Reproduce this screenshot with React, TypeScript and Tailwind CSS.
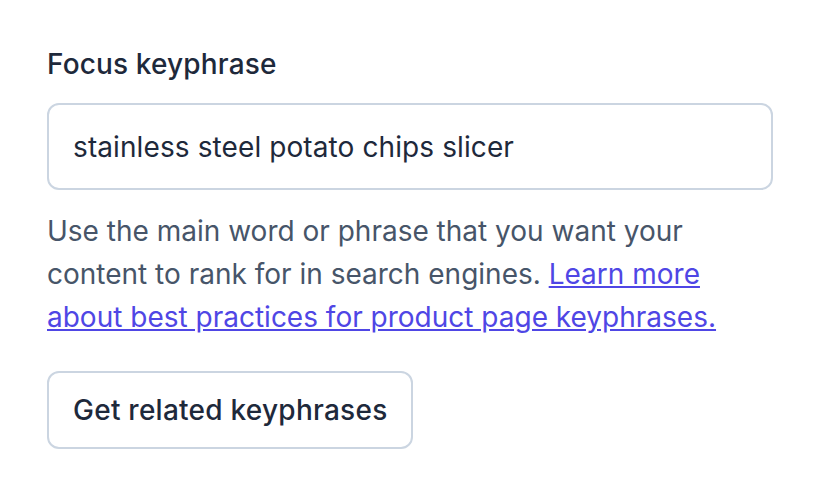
export default function App() {
  return (
    <div className="w-[822px] h-[500px] bg-white" style={{ fontFamily: "Inter, 'Noto Sans', sans-serif" }}>
      <div className="pt-[44px] pl-[47px] w-[773px]">
        <div className="text-[28px] leading-[40px] font-medium text-[#1e293b] tracking-[0.15px]">Focus keyphrase</div>
        <div className="mt-[19px] h-[87px] border-2 border-[#cbd5e1] rounded-[12px] flex items-center px-[24px] text-[28px] text-[#1e293b] tracking-[0.1px]">
          stainless steel potato chips slicer
        </div>
        <p className="mt-[20px] text-[28px] leading-[43px] text-[#475569]">
          Use the main word or phrase that you want your content to rank for in search engines.{" "}
          <a href="#" className="text-[#4f46e5] underline">Learn more about best practices for product page keyphrases.</a>
        </p>
        <button className="mt-[32px] h-[78px] border-2 border-[#cbd5e1] rounded-[12px] px-[24px] text-[28px] font-medium text-[#1e293b] bg-white tracking-[0.25px]">
          Get related keyphrases
        </button>
      </div>
    </div>
  );
}
